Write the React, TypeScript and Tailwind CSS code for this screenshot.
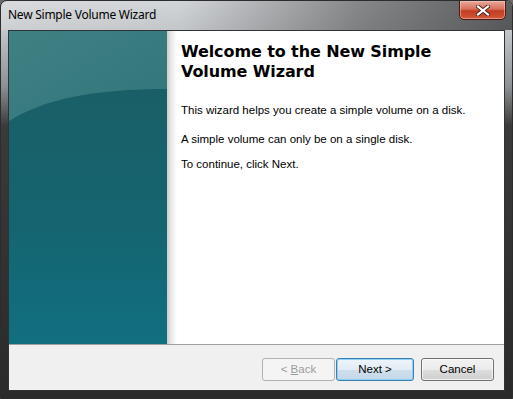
import React from "react";

function TealPanel() {
  return (
    <svg width="158" height="313" viewBox="0 0 158 313" className="block shrink-0">
      <defs>
        <linearGradient id="topg" x1="0" y1="0" x2="0.3" y2="1">
          <stop offset="0" stopColor="#3f8083" />
          <stop offset="1" stopColor="#286e74" />
        </linearGradient>
        <linearGradient id="botg" x1="0" y1="0" x2="0" y2="1">
          <stop offset="0" stopColor="#1a5f67" />
          <stop offset="0.5" stopColor="#15646f" />
          <stop offset="1" stopColor="#116f80" />
        </linearGradient>
      </defs>
      <rect width="158" height="313" fill="url(#topg)" />
      <path d="M0 90 C 35 68, 85 58, 158 58 V313 H0 Z" fill="url(#botg)" />
    </svg>
  );
}

function CloseIcon() {
  return (
    <svg width="14" height="11" viewBox="0 0 14 11">
      <path d="M2 1.5 L12 9.5 M12 1.5 L2 9.5" stroke="#4a2018" strokeWidth="4" strokeLinecap="square" />
      <path d="M2 1.5 L12 9.5 M12 1.5 L2 9.5" stroke="#ffffff" strokeWidth="2.2" strokeLinecap="square" />
    </svg>
  );
}

export default function App() {
  const dlg = { fontFamily: '"Liberation Sans", Arial, sans-serif' };
  return (
    <div className="w-[513px] h-[399px] bg-[#6a6a6a] overflow-hidden">
      <div className="w-[513px] h-[399px] flex flex-col rounded-t-[7px] border border-[#2c2c2c] bg-[linear-gradient(to_bottom,#d2d5d8_0px,#c3c6c9_30px,#8e9194_85px,#3a3a3a_125px,#2a2a2a_100%)] overflow-hidden">
        {/* Title bar */}
        <div className="h-[29px] flex items-start justify-between bg-[linear-gradient(to_right,rgba(255,255,255,0.15)_0%,rgba(0,0,0,0)_35%,rgba(40,40,40,0.45)_70%,rgba(40,40,40,0.7)_100%)]">
          <div
            className="pl-[7px] pt-[6px] text-[12px] leading-[16px] tracking-[-0.25px] text-black"
            style={{ fontFamily: '"Noto Sans", "Open Sans", sans-serif' }}
          >
            New Simple Volume Wizard
          </div>
          <div className="mr-[6px] mt-[-1px] w-[47px] h-[20px] rounded-b-[5px] border border-[#4a1a12] bg-[linear-gradient(to_bottom,#e8a89a_0%,#d8705c_45%,#c23c22_55%,#d2583a_100%)] flex items-center justify-center shadow-[inset_0_0_0_1px_rgba(255,210,200,0.5)]">
            <CloseIcon />
          </div>
        </div>
        {/* Middle */}
        <div className="flex h-[361px]">
          <div className="w-[7px] shrink-0" />
          <div className="w-[497px] h-[361px] shrink-0 flex flex-col border border-[#2f3337] bg-white" style={dlg}>
            <div className="flex h-[313px]">
              <TealPanel />
              <div className="flex-1 pl-[14px] pt-[11px] bg-[linear-gradient(to_right,#cccccc_0px,#e8e8e8_4px,#ffffff_10px)]">
                <div
                  className="text-[16px] leading-[20px] font-bold text-black tracking-[-0.1px]"
                  style={{ fontFamily: '"DejaVu Sans", Verdana, sans-serif' }}
                >
                  Welcome to the New Simple
                  <br />
                  Volume Wizard
                </div>
                <div className="mt-[22px] text-[11.5px] leading-[13px] text-black">
                  This wizard helps you create a simple volume on a disk.
                </div>
                <div className="mt-[16px] text-[11.5px] leading-[13px] text-black">
                  A simple volume can only be on a single disk.
                </div>
                <div className="mt-[12px] text-[11.5px] leading-[13px] text-black">
                  To continue, click Next.
                </div>
              </div>
            </div>
            <div className="h-px bg-[#a0a0a0]" />
            <div className="flex-1 bg-[#f0f0f0] flex justify-end items-start pt-[13px] pr-[10px]">
              <div className="w-[73px] h-[23px] rounded-[3px] border border-[#adb2b5] bg-[#f4f4f4] flex items-center justify-center text-[11.5px] text-[#9c9c9c]">
                &lt; <span className="underline ml-[3px]">B</span>ack
              </div>
              <div className="ml-[1px] w-[78px] h-[23px] rounded-[3px] border border-[#3c7fb1] bg-[linear-gradient(to_bottom,#eef5fa_0%,#e2ecf4_50%,#cfdfec_51%,#c4d8e9_100%)] shadow-[inset_0_0_0_1px_#8ed0f5] flex items-center justify-center text-[11.5px] text-black">
                Next &gt;
              </div>
              <div className="ml-[7px] w-[73px] h-[23px] rounded-[3px] border border-[#707070] bg-[linear-gradient(to_bottom,#f2f2f2_0%,#ebebeb_50%,#dddddd_51%,#cfcfcf_100%)] shadow-[inset_0_0_0_1px_rgba(255,255,255,0.7)] flex items-center justify-center text-[11.5px] text-black">
                Cancel
              </div>
            </div>
          </div>
          <div className="flex-1" />
        </div>
      </div>
    </div>
  );
}
